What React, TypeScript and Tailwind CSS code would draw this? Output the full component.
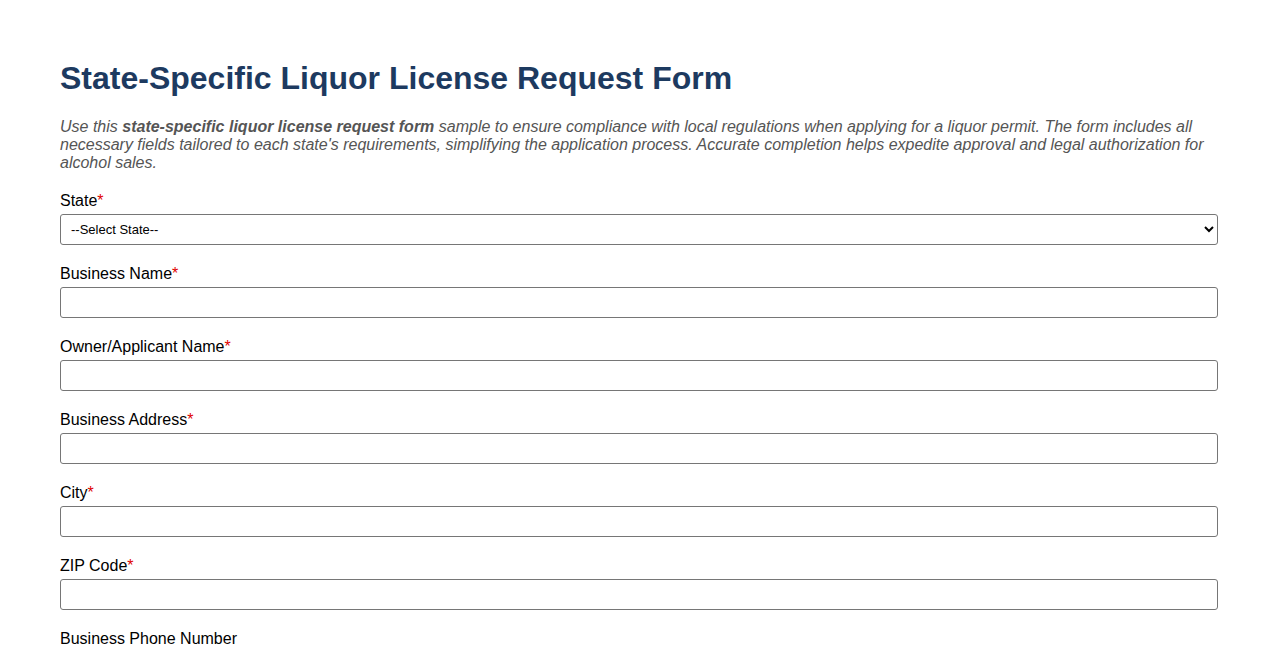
import React from 'react';

const fields = [
  { label: 'Business Name', required: true },
  { label: 'Owner/Applicant Name', required: true },
  { label: 'Business Address', required: true },
  { label: 'City', required: true },
  { label: 'ZIP Code', required: true },
  { label: 'Business Phone Number', required: false },
];

const Label = ({ text, required }: { text: string; required: boolean }) => (
  <label className="block pt-[1px] text-[16px] leading-[18px] text-black mb-[4px]">
    {text}
    {required && <span className="text-[#e00000]">*</span>}
  </label>
);

export default function App() {
  return (
    <div className="min-h-screen bg-white px-[60px] pt-[60px] font-['Liberation_Sans',Arial,sans-serif]">
      <h1 className="text-[32px] leading-[37px] font-bold text-[#1d3a60]">
        State-Specific Liquor License Request Form
      </h1>
      <p className="mt-[21px] text-[16px] leading-[18px] italic text-[#555555]">
        Use this <strong className="font-bold">state-specific liquor license request form</strong> sample to ensure
        compliance with local regulations when applying for a liquor permit. The form includes all necessary fields
        tailored to each state's requirements, simplifying the application process. Accurate completion helps expedite
        approval and legal authorization for alcohol sales.
      </p>

      <form className="mt-[19px]">
        {/* State */}
        <div className="mb-[19px]">
          <Label text="State" required />
          <select className="block w-full h-[31px] border border-[#767676] rounded-[3px] bg-white px-[6px] text-[13px] text-black">
            <option>--Select State--</option>
          </select>
        </div>

        {fields.map((f) => (
          <div key={f.label} className="mb-[19px]">
            <Label text={f.label} required={f.required} />
            <input
              type="text"
              className="block w-full h-[31px] border border-[#767676] rounded-[3px] bg-white px-[6px] text-[13px]"
            />
          </div>
        ))}
      </form>
    </div>
  );
}
